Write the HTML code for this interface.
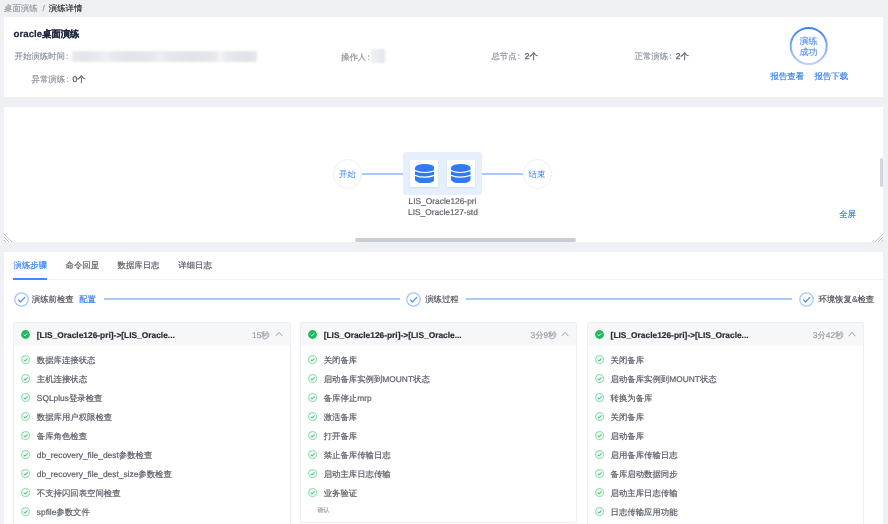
<!DOCTYPE html>
<html><head><meta charset="utf-8">
<style>
*{box-sizing:border-box;margin:0;padding:0}
html,body{width:888px;height:524px;overflow:hidden}
body{background:#eef0f4;font-family:"Liberation Sans",sans-serif;position:relative;color:#333;font-size:8.4px;line-height:1;text-rendering:geometricPrecision}
.a{position:absolute;white-space:nowrap}
.card{position:absolute;background:#fff}
.t{position:absolute;white-space:nowrap;line-height:12px;height:12px;-webkit-text-stroke-width:.2px}
.grey{color:#8f949c}
.cl{margin-left:1.3px}
.v{color:#5a5f6b;-webkit-text-stroke-width:.35px !important}
.blue{color:#3c82f6}
.blur{position:absolute;background:#e9eaee;filter:blur(1.2px);border-radius:1px}
#w{position:absolute;left:0;top:0;width:888px;height:524px;overflow:hidden;filter:blur(.4px)}
.sc{position:absolute;border-radius:2px;background:#d3d6dc}
i{font-style:normal}
</style></head>
<body><div id="w">
<!-- breadcrumb -->
<div class="t" style="left:4px;top:1.7px;color:#9a9da4"><i>桌面演练</i></div>
<div class="t" style="left:42.5px;top:1.7px;color:#9a9da4">/</div>
<div class="t" style="left:48.8px;top:1.7px;color:#333"><i>演练详情</i></div>

<!-- header card -->
<div class="card" style="left:4px;top:17px;width:879px;height:80px"></div>
<div class="t" style="left:13.6px;top:28.1px;font-size:9.7px;font-weight:bold;color:#1f2641">oracle<span style="font-size:9.3px"><i>桌面演练</i></span></div>
<div class="t grey" style="left:14.5px;top:50.4px"><i>开始演练时间</i><span class="cl">:</span></div>
<div class="blur" style="left:72px;top:51px;width:185px;height:11px;background:linear-gradient(to right,#e9eaee 0,#e4e5ea 12px,#e9eaee 26px,#f0f1f3 34px,#e8e9ed 42px,#e3e4e9 60px,#e6e7eb 80px,#eeeff2 88px,#e6e7eb 96px,#e3e4e9 120px,#e6e7eb 142px,#f4f4f6 148px,#e8e9ed 156px,#e1e2e7 175px,#e9eaee 185px)"></div>
<div class="t grey" style="left:341px;top:50.6px"><i>操作人</i><span class="cl">:</span></div>
<div class="blur" style="left:370.5px;top:48.5px;width:14.5px;height:14px;background:linear-gradient(to right,#f0f1f4,#e3e6ed);filter:blur(.8px)"></div>
<div class="t grey" style="left:491.4px;top:50.4px"><i>总节点</i><span class="cl">:</span></div>
<div class="t v" style="left:524.8px;top:50.4px">2<i>个</i></div>
<div class="t grey" style="left:634.5px;top:50.4px"><i>正常演练</i><span class="cl">:</span></div>
<div class="t v" style="left:675.8px;top:50.4px">2<i>个</i></div>
<div class="t grey" style="left:31.6px;top:73.2px"><i>异常演练</i><span class="cl">:</span></div>
<div class="t v" style="left:72.6px;top:73.2px">0<i>个</i></div>

<svg class="a" style="left:789px;top:27.4px" width="40" height="39" viewBox="0 0 40 39">
<defs><linearGradient id="g1" x1="0" y1="0" x2="0" y2="1">
<stop offset="0" stop-color="#3b82f6"/><stop offset="1" stop-color="#b9d3fb"/></linearGradient></defs>
<circle cx="19.7" cy="19" r="18" fill="none" stroke="url(#g1)" stroke-width="2"/>
</svg>
<div class="t blue" style="left:799.6px;top:35px;font-size:9px;color:#5e95f4"><i>演练</i></div>
<div class="t blue" style="left:799.6px;top:45.7px;font-size:9px;color:#5e95f4"><i>成功</i></div>
<div class="t blue" style="left:770.5px;top:70px"><i>报告查看</i></div>
<div class="t blue" style="left:814.5px;top:70px"><i>报告下载</i></div>

<!-- flow card -->
<div class="card" style="left:4px;top:107px;width:879px;height:135px"></div>
<div class="a" style="left:332.5px;top:159px;width:29.5px;height:29.5px;border-radius:50%;border:1px solid #eceef2;background:#fff"></div>
<div class="t blue" style="left:338.8px;top:167.8px;-webkit-text-stroke-width:0"><i>开始</i></div>
<div class="a" style="left:362px;top:172.8px;width:41px;height:2px;background:#a9c9fb"></div>
<div class="a" style="left:403.3px;top:152.3px;width:78.6px;height:42.3px;border-radius:3px;background:#e5effd"></div>
<div class="a" style="left:409.8px;top:159.6px;width:28.4px;height:27.4px;background:#fff;border-radius:1px;box-shadow:0 1px 2px rgba(60,90,140,.12)"></div>
<div class="a" style="left:446.5px;top:159.6px;width:28.4px;height:27.4px;background:#fff;border-radius:1px;box-shadow:0 1px 2px rgba(60,90,140,.12)"></div>
<svg class="a" style="left:414.5px;top:163.7px" width="19.5" height="19.5" viewBox="0 0 19.5 19.5">
<path d="M0,3.8 A9.75,3.8 0 0 1 19.5,3.8 L19.5,15.6 A9.75,3.8 0 0 1 0,15.6 Z" fill="#2f7bf5"/>
<path d="M-1,6.2 Q9.75,10.8 20.5,6.2 M-1,10.9 Q9.75,15.5 20.5,10.9" fill="none" stroke="#fff" stroke-width="1.2"/>
</svg>
<svg class="a" style="left:451px;top:163.7px" width="19.5" height="19.5" viewBox="0 0 19.5 19.5">
<path d="M0,3.8 A9.75,3.8 0 0 1 19.5,3.8 L19.5,15.6 A9.75,3.8 0 0 1 0,15.6 Z" fill="#2f7bf5"/>
<path d="M-1,6.2 Q9.75,10.8 20.5,6.2 M-1,10.9 Q9.75,15.5 20.5,10.9" fill="none" stroke="#fff" stroke-width="1.2"/>
</svg>
<div class="t" style="left:408.5px;top:195px;color:#60646c">LIS_Oracle126-pri</div>
<div class="t" style="left:408px;top:206.2px;color:#60646c">LIS_Oracle127-std</div>
<div class="a" style="left:481.9px;top:172.8px;width:41px;height:2px;background:#a9c9fb"></div>
<div class="a" style="left:522.7px;top:159px;width:29.5px;height:29.5px;border-radius:50%;border:1px solid #eceef2;background:#fff"></div>
<div class="t blue" style="left:528.6px;top:167.8px;-webkit-text-stroke-width:0"><i>结束</i></div>
<div class="t blue" style="left:839.2px;top:208px"><i>全屏</i></div>
<div class="sc" style="left:879.6px;top:157.8px;width:3.4px;height:29.4px"></div>
<div class="sc" style="left:355.2px;top:238.2px;width:220.8px;height:3.4px;background:#c9cdd5"></div>
<svg class="a" style="left:4px;top:234px" width="8" height="8" viewBox="0 0 8 8"><path d="M0,0 L8,8 M0,3 L5,8 M0,6 L2,8" stroke="#a9adb5" stroke-width=".8"/></svg>
<svg class="a" style="left:875px;top:234px" width="8" height="8" viewBox="0 0 8 8"><path d="M8,0 L0,8 M8,3 L3,8 M8,6 L6,8" stroke="#a9adb5" stroke-width=".8"/></svg>

<!-- steps card -->
<div class="card" style="left:4px;top:252px;width:879px;height:280px"></div>
<div class="t blue" style="left:13.5px;top:259.3px"><i>演练步骤</i></div>
<div class="t" style="left:65.5px;top:259.3px;color:#5a5e66"><i>命令回显</i></div>
<div class="t" style="left:117.5px;top:259.3px;color:#5a5e66"><i>数据库日志</i></div>
<div class="t" style="left:178.3px;top:259.3px;color:#5a5e66"><i>详细日志</i></div>
<div class="a" style="left:13.4px;top:279px;width:869.6px;height:1px;background:#f1f2f4"></div>
<div class="a" style="left:13.4px;top:277.6px;width:33.6px;height:2px;background:#4388f7"></div>

<div class="a" style="left:103.6px;top:298.3px;width:296px;height:1.3px;background:#a9c9fb"></div>
<div class="a" style="left:465.8px;top:298.3px;width:326.2px;height:1.3px;background:#a9c9fb"></div>
<svg class="a" style="left:13.6px;top:291.6px" width="15" height="15" viewBox="0 0 15 15"><circle cx="7.5" cy="7.5" r="6.7" fill="#fff" stroke="#a3c6fb" stroke-width="1.2"/><path d="M4.1,7.6 L6.5,10 L11,5.2" fill="none" stroke="#4187f6" stroke-width="1.2"/></svg>
<div class="t" style="left:31.8px;top:293px;color:#50545c"><i>演练前检查</i></div>
<div class="t blue" style="left:79.2px;top:293px"><i>配置</i></div>
<svg class="a" style="left:405.8px;top:291.5px" width="15" height="15" viewBox="0 0 15 15"><circle cx="7.5" cy="7.5" r="6.7" fill="#fff" stroke="#a3c6fb" stroke-width="1.2"/><path d="M4.1,7.6 L6.5,10 L11,5.2" fill="none" stroke="#4187f6" stroke-width="1.2"/></svg>
<div class="t" style="left:425.2px;top:293px;color:#50545c"><i>演练过程</i></div>
<svg class="a" style="left:798.8px;top:291.5px" width="15" height="15" viewBox="0 0 15 15"><circle cx="7.5" cy="7.5" r="6.7" fill="#fff" stroke="#a3c6fb" stroke-width="1.2"/><path d="M4.1,7.6 L6.5,10 L11,5.2" fill="none" stroke="#4187f6" stroke-width="1.2"/></svg>
<div class="t" style="left:818.4px;top:293px;color:#50545c"><i>环境恢复</i>&amp;<i>检查</i></div>
<div class="a" style="left:13px;top:322px;width:278px;height:240px;border:1px solid #eef0f3;border-radius:2px;background:#fff"></div>
<div class="a" style="left:14px;top:323px;width:276px;height:23px;background:#f6f7f9"></div>
<svg class="a" style="left:21.0px;top:330.4px" width="9" height="9" viewBox="0 0 9 9"><circle cx="4.5" cy="4.5" r="4.4" fill="#1fba5b"/><path d="M2.6,4.6 L3.9,5.8 L6.4,3.3" fill="none" stroke="#fff" stroke-width=".9"/></svg>
<div class="t" style="left:36.8px;top:328.7px;font-weight:bold;color:#2b2f36">[LIS_Oracle126-pri]-&gt;[LIS_Oracle...</div>
<div class="t grey" style="right:618.3px;top:328.7px;color:#9ba0a8">15<i>秒</i></div>
<svg class="a" style="left:274.5px;top:331px" width="8" height="6" viewBox="0 0 8 6"><path d="M0.6,5.2 L4,1.4 L7.4,5.2" fill="none" stroke="#9ba0a8" stroke-width="1"/></svg>
<svg class="a" style="left:21.2px;top:355.3px" width="9.2" height="9.2" viewBox="0 0 9.2 9.2"><circle cx="4.6" cy="4.6" r="3.95" fill="none" stroke="#99e2b5" stroke-width="1.25"/><path d="M2.6,4.7 L4,6 L6.7,3.3" fill="none" stroke="#4cc981" stroke-width="1.15"/></svg>
<div class="t" style="left:36.8px;top:353.9px;color:#5a5e66"><i>数据库连接状态</i></div>
<svg class="a" style="left:21.2px;top:374.2px" width="9.2" height="9.2" viewBox="0 0 9.2 9.2"><circle cx="4.6" cy="4.6" r="3.95" fill="none" stroke="#99e2b5" stroke-width="1.25"/><path d="M2.6,4.7 L4,6 L6.7,3.3" fill="none" stroke="#4cc981" stroke-width="1.15"/></svg>
<div class="t" style="left:36.8px;top:372.8px;color:#5a5e66"><i>主机连接状态</i></div>
<svg class="a" style="left:21.2px;top:393.2px" width="9.2" height="9.2" viewBox="0 0 9.2 9.2"><circle cx="4.6" cy="4.6" r="3.95" fill="none" stroke="#99e2b5" stroke-width="1.25"/><path d="M2.6,4.7 L4,6 L6.7,3.3" fill="none" stroke="#4cc981" stroke-width="1.15"/></svg>
<div class="t" style="left:36.8px;top:391.8px;color:#5a5e66">SQLplus<i>登录检查</i></div>
<svg class="a" style="left:21.2px;top:412.1px" width="9.2" height="9.2" viewBox="0 0 9.2 9.2"><circle cx="4.6" cy="4.6" r="3.95" fill="none" stroke="#99e2b5" stroke-width="1.25"/><path d="M2.6,4.7 L4,6 L6.7,3.3" fill="none" stroke="#4cc981" stroke-width="1.15"/></svg>
<div class="t" style="left:36.8px;top:410.8px;color:#5a5e66"><i>数据库用户权限检查</i></div>
<svg class="a" style="left:21.2px;top:431.1px" width="9.2" height="9.2" viewBox="0 0 9.2 9.2"><circle cx="4.6" cy="4.6" r="3.95" fill="none" stroke="#99e2b5" stroke-width="1.25"/><path d="M2.6,4.7 L4,6 L6.7,3.3" fill="none" stroke="#4cc981" stroke-width="1.15"/></svg>
<div class="t" style="left:36.8px;top:429.7px;color:#5a5e66"><i>备库角色检查</i></div>
<svg class="a" style="left:21.2px;top:450.0px" width="9.2" height="9.2" viewBox="0 0 9.2 9.2"><circle cx="4.6" cy="4.6" r="3.95" fill="none" stroke="#99e2b5" stroke-width="1.25"/><path d="M2.6,4.7 L4,6 L6.7,3.3" fill="none" stroke="#4cc981" stroke-width="1.15"/></svg>
<div class="t" style="left:36.8px;top:448.6px;color:#5a5e66">db_recovery_file_dest<i>参数检查</i></div>
<svg class="a" style="left:21.2px;top:469.0px" width="9.2" height="9.2" viewBox="0 0 9.2 9.2"><circle cx="4.6" cy="4.6" r="3.95" fill="none" stroke="#99e2b5" stroke-width="1.25"/><path d="M2.6,4.7 L4,6 L6.7,3.3" fill="none" stroke="#4cc981" stroke-width="1.15"/></svg>
<div class="t" style="left:36.8px;top:467.6px;color:#5a5e66">db_recovery_file_dest_size<i>参数检查</i></div>
<svg class="a" style="left:21.2px;top:487.9px" width="9.2" height="9.2" viewBox="0 0 9.2 9.2"><circle cx="4.6" cy="4.6" r="3.95" fill="none" stroke="#99e2b5" stroke-width="1.25"/><path d="M2.6,4.7 L4,6 L6.7,3.3" fill="none" stroke="#4cc981" stroke-width="1.15"/></svg>
<div class="t" style="left:36.8px;top:486.5px;color:#5a5e66"><i>不支持闪回表空间检查</i></div>
<svg class="a" style="left:21.2px;top:506.9px" width="9.2" height="9.2" viewBox="0 0 9.2 9.2"><circle cx="4.6" cy="4.6" r="3.95" fill="none" stroke="#99e2b5" stroke-width="1.25"/><path d="M2.6,4.7 L4,6 L6.7,3.3" fill="none" stroke="#4cc981" stroke-width="1.15"/></svg>
<div class="t" style="left:36.8px;top:505.5px;color:#5a5e66">spfile<i>参数文件</i></div>
<div class="a" style="left:300px;top:322px;width:277px;height:201px;border:1px solid #eef0f3;border-radius:2px;background:#fff"></div>
<div class="a" style="left:301px;top:323px;width:275px;height:23px;background:#f6f7f9"></div>
<svg class="a" style="left:307.9px;top:330.4px" width="9" height="9" viewBox="0 0 9 9"><circle cx="4.5" cy="4.5" r="4.4" fill="#1fba5b"/><path d="M2.6,4.6 L3.9,5.8 L6.4,3.3" fill="none" stroke="#fff" stroke-width=".9"/></svg>
<div class="t" style="left:323.7px;top:328.7px;font-weight:bold;color:#2b2f36">[LIS_Oracle126-pri]-&gt;[LIS_Oracle...</div>
<div class="t grey" style="right:331.4000000000001px;top:328.7px;color:#9ba0a8">3<i>分</i>9<i>秒</i></div>
<svg class="a" style="left:561.3999999999999px;top:331px" width="8" height="6" viewBox="0 0 8 6"><path d="M0.6,5.2 L4,1.4 L7.4,5.2" fill="none" stroke="#9ba0a8" stroke-width="1"/></svg>
<svg class="a" style="left:308.09999999999997px;top:355.3px" width="9.2" height="9.2" viewBox="0 0 9.2 9.2"><circle cx="4.6" cy="4.6" r="3.95" fill="none" stroke="#99e2b5" stroke-width="1.25"/><path d="M2.6,4.7 L4,6 L6.7,3.3" fill="none" stroke="#4cc981" stroke-width="1.15"/></svg>
<div class="t" style="left:323.7px;top:353.9px;color:#5a5e66"><i>关闭备库</i></div>
<svg class="a" style="left:308.09999999999997px;top:374.2px" width="9.2" height="9.2" viewBox="0 0 9.2 9.2"><circle cx="4.6" cy="4.6" r="3.95" fill="none" stroke="#99e2b5" stroke-width="1.25"/><path d="M2.6,4.7 L4,6 L6.7,3.3" fill="none" stroke="#4cc981" stroke-width="1.15"/></svg>
<div class="t" style="left:323.7px;top:372.8px;color:#5a5e66"><i>启动备库实例到</i>MOUNT<i>状态</i></div>
<svg class="a" style="left:308.09999999999997px;top:393.2px" width="9.2" height="9.2" viewBox="0 0 9.2 9.2"><circle cx="4.6" cy="4.6" r="3.95" fill="none" stroke="#99e2b5" stroke-width="1.25"/><path d="M2.6,4.7 L4,6 L6.7,3.3" fill="none" stroke="#4cc981" stroke-width="1.15"/></svg>
<div class="t" style="left:323.7px;top:391.8px;color:#5a5e66"><i>备库停止</i>mrp</div>
<svg class="a" style="left:308.09999999999997px;top:412.1px" width="9.2" height="9.2" viewBox="0 0 9.2 9.2"><circle cx="4.6" cy="4.6" r="3.95" fill="none" stroke="#99e2b5" stroke-width="1.25"/><path d="M2.6,4.7 L4,6 L6.7,3.3" fill="none" stroke="#4cc981" stroke-width="1.15"/></svg>
<div class="t" style="left:323.7px;top:410.8px;color:#5a5e66"><i>激活备库</i></div>
<svg class="a" style="left:308.09999999999997px;top:431.1px" width="9.2" height="9.2" viewBox="0 0 9.2 9.2"><circle cx="4.6" cy="4.6" r="3.95" fill="none" stroke="#99e2b5" stroke-width="1.25"/><path d="M2.6,4.7 L4,6 L6.7,3.3" fill="none" stroke="#4cc981" stroke-width="1.15"/></svg>
<div class="t" style="left:323.7px;top:429.7px;color:#5a5e66"><i>打开备库</i></div>
<svg class="a" style="left:308.09999999999997px;top:450.0px" width="9.2" height="9.2" viewBox="0 0 9.2 9.2"><circle cx="4.6" cy="4.6" r="3.95" fill="none" stroke="#99e2b5" stroke-width="1.25"/><path d="M2.6,4.7 L4,6 L6.7,3.3" fill="none" stroke="#4cc981" stroke-width="1.15"/></svg>
<div class="t" style="left:323.7px;top:448.6px;color:#5a5e66"><i>禁止备库传输日志</i></div>
<svg class="a" style="left:308.09999999999997px;top:469.0px" width="9.2" height="9.2" viewBox="0 0 9.2 9.2"><circle cx="4.6" cy="4.6" r="3.95" fill="none" stroke="#99e2b5" stroke-width="1.25"/><path d="M2.6,4.7 L4,6 L6.7,3.3" fill="none" stroke="#4cc981" stroke-width="1.15"/></svg>
<div class="t" style="left:323.7px;top:467.6px;color:#5a5e66"><i>启动主库日志传输</i></div>
<svg class="a" style="left:308.09999999999997px;top:487.9px" width="9.2" height="9.2" viewBox="0 0 9.2 9.2"><circle cx="4.6" cy="4.6" r="3.95" fill="none" stroke="#99e2b5" stroke-width="1.25"/><path d="M2.6,4.7 L4,6 L6.7,3.3" fill="none" stroke="#4cc981" stroke-width="1.15"/></svg>
<div class="t" style="left:323.7px;top:486.5px;color:#5a5e66"><i>业务验证</i></div>
<div class="t" style="left:317.4px;top:507.3px;font-size:6px;line-height:8px;height:8px;color:#a6a9ae"><i>确认</i></div>
<div class="a" style="left:587px;top:322px;width:277px;height:240px;border:1px solid #eef0f3;border-radius:2px;background:#fff"></div>
<div class="a" style="left:588px;top:323px;width:275px;height:23px;background:#f6f7f9"></div>
<svg class="a" style="left:594.8px;top:330.4px" width="9" height="9" viewBox="0 0 9 9"><circle cx="4.5" cy="4.5" r="4.4" fill="#1fba5b"/><path d="M2.6,4.6 L3.9,5.8 L6.4,3.3" fill="none" stroke="#fff" stroke-width=".9"/></svg>
<div class="t" style="left:610.5999999999999px;top:328.7px;font-weight:bold;color:#2b2f36">[LIS_Oracle126-pri]-&gt;[LIS_Oracle...</div>
<div class="t grey" style="right:44.5px;top:328.7px;color:#9ba0a8">3<i>分</i>42<i>秒</i></div>
<svg class="a" style="left:848.3px;top:331px" width="8" height="6" viewBox="0 0 8 6"><path d="M0.6,5.2 L4,1.4 L7.4,5.2" fill="none" stroke="#9ba0a8" stroke-width="1"/></svg>
<svg class="a" style="left:595.0px;top:355.3px" width="9.2" height="9.2" viewBox="0 0 9.2 9.2"><circle cx="4.6" cy="4.6" r="3.95" fill="none" stroke="#99e2b5" stroke-width="1.25"/><path d="M2.6,4.7 L4,6 L6.7,3.3" fill="none" stroke="#4cc981" stroke-width="1.15"/></svg>
<div class="t" style="left:610.5999999999999px;top:353.9px;color:#5a5e66"><i>关闭备库</i></div>
<svg class="a" style="left:595.0px;top:374.2px" width="9.2" height="9.2" viewBox="0 0 9.2 9.2"><circle cx="4.6" cy="4.6" r="3.95" fill="none" stroke="#99e2b5" stroke-width="1.25"/><path d="M2.6,4.7 L4,6 L6.7,3.3" fill="none" stroke="#4cc981" stroke-width="1.15"/></svg>
<div class="t" style="left:610.5999999999999px;top:372.8px;color:#5a5e66"><i>启动备库实例到</i>MOUNT<i>状态</i></div>
<svg class="a" style="left:595.0px;top:393.2px" width="9.2" height="9.2" viewBox="0 0 9.2 9.2"><circle cx="4.6" cy="4.6" r="3.95" fill="none" stroke="#99e2b5" stroke-width="1.25"/><path d="M2.6,4.7 L4,6 L6.7,3.3" fill="none" stroke="#4cc981" stroke-width="1.15"/></svg>
<div class="t" style="left:610.5999999999999px;top:391.8px;color:#5a5e66"><i>转换为备库</i></div>
<svg class="a" style="left:595.0px;top:412.1px" width="9.2" height="9.2" viewBox="0 0 9.2 9.2"><circle cx="4.6" cy="4.6" r="3.95" fill="none" stroke="#99e2b5" stroke-width="1.25"/><path d="M2.6,4.7 L4,6 L6.7,3.3" fill="none" stroke="#4cc981" stroke-width="1.15"/></svg>
<div class="t" style="left:610.5999999999999px;top:410.8px;color:#5a5e66"><i>关闭备库</i></div>
<svg class="a" style="left:595.0px;top:431.1px" width="9.2" height="9.2" viewBox="0 0 9.2 9.2"><circle cx="4.6" cy="4.6" r="3.95" fill="none" stroke="#99e2b5" stroke-width="1.25"/><path d="M2.6,4.7 L4,6 L6.7,3.3" fill="none" stroke="#4cc981" stroke-width="1.15"/></svg>
<div class="t" style="left:610.5999999999999px;top:429.7px;color:#5a5e66"><i>启动备库</i></div>
<svg class="a" style="left:595.0px;top:450.0px" width="9.2" height="9.2" viewBox="0 0 9.2 9.2"><circle cx="4.6" cy="4.6" r="3.95" fill="none" stroke="#99e2b5" stroke-width="1.25"/><path d="M2.6,4.7 L4,6 L6.7,3.3" fill="none" stroke="#4cc981" stroke-width="1.15"/></svg>
<div class="t" style="left:610.5999999999999px;top:448.6px;color:#5a5e66"><i>启用备库传输日志</i></div>
<svg class="a" style="left:595.0px;top:469.0px" width="9.2" height="9.2" viewBox="0 0 9.2 9.2"><circle cx="4.6" cy="4.6" r="3.95" fill="none" stroke="#99e2b5" stroke-width="1.25"/><path d="M2.6,4.7 L4,6 L6.7,3.3" fill="none" stroke="#4cc981" stroke-width="1.15"/></svg>
<div class="t" style="left:610.5999999999999px;top:467.6px;color:#5a5e66"><i>备库启动数据同步</i></div>
<svg class="a" style="left:595.0px;top:487.9px" width="9.2" height="9.2" viewBox="0 0 9.2 9.2"><circle cx="4.6" cy="4.6" r="3.95" fill="none" stroke="#99e2b5" stroke-width="1.25"/><path d="M2.6,4.7 L4,6 L6.7,3.3" fill="none" stroke="#4cc981" stroke-width="1.15"/></svg>
<div class="t" style="left:610.5999999999999px;top:486.5px;color:#5a5e66"><i>启动主库日志传输</i></div>
<svg class="a" style="left:595.0px;top:506.9px" width="9.2" height="9.2" viewBox="0 0 9.2 9.2"><circle cx="4.6" cy="4.6" r="3.95" fill="none" stroke="#99e2b5" stroke-width="1.25"/><path d="M2.6,4.7 L4,6 L6.7,3.3" fill="none" stroke="#4cc981" stroke-width="1.15"/></svg>
<div class="t" style="left:610.5999999999999px;top:505.5px;color:#5a5e66"><i>日志传输应用功能</i></div>
</div></body></html>
